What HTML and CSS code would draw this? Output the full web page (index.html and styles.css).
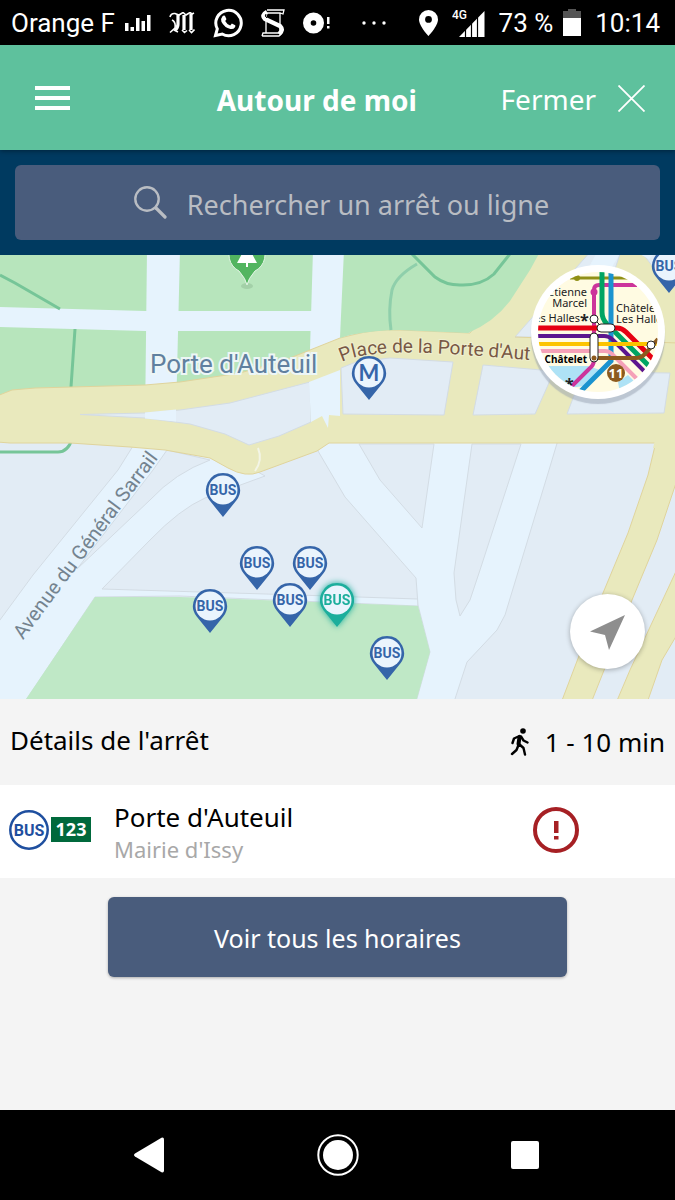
FILE: index.html
```html
<!DOCTYPE html>
<html lang="fr">
<head>
<meta charset="utf-8">
<meta name="viewport" content="width=device-width, initial-scale=1">
<title>Autour de moi</title>
<link rel="stylesheet" href="styles.css">
</head>
<body>
<svg class="defs" aria-hidden="true">
  <symbol id="pin" viewBox="0 0 36 46">
    <path fill="currentColor" d="M18 1a17 17 0 0 1 13.500 27.300L18 45 4.500 28.300A17 17 0 0 1 18 1z"/>
    <circle class="pin-face" cx="18" cy="18" r="14.500"/>
  </symbol>
</svg>

<div class="status">
  <div class="status-group">
    <span class="carrier">Orange F
      <svg width="26" height="18" viewBox="0 0 26 18" fill="#fff"><path d="M0 9h3.500v8H0zM5.500 13H9v4H5.500zM11 4h3.500v13H11zM16.500 7H20v10h-3.500zM22 1h3.500v16H22z"/></svg>
    </span>
    <svg width="26" height="22" viewBox="0 0 26 22" fill="none" stroke="#fff"><path stroke-width="1.600" d="M1 5q1-4 5-3.500L10 3l4-2.500L17 3l4-2.500L23 2l2-1M3 8q4 2 3 8l-5 4.500M5 18l4 2M13 18l2.500 2.500 2.500-2M20 18l2.500 2.500 3-3"/><path stroke-width="3.200" d="M9 3v9q0 4-3 6M15 3v15M22 2v16"/></svg>
    <svg width="30" height="30" viewBox="0 0 30 30"><path fill="none" stroke="#fff" stroke-width="3" d="M2.500 27.500l1.800-6.600A12.700 12.700 0 1 1 9.200 26z"/><path fill="#fff" d="M9.500 8.300q1-1.300 2.400-.6l1.500 3.300q.1.700-1.200 2.100 1.600 3.300 5 4.500l1.700-2 3.300 1.600q.5.500-.2 2-1.600 2.400-4.600 1.800-6-1.400-9-7.300-1-3 1.100-5.400z"/></svg>
    <svg width="24" height="28" viewBox="0 0 24 28" fill="none" stroke="#fff"><path stroke-width="1.300" d="M6 1h17l-1 4-3-1H5M5 3v21M19 4v19M1 27h17l3-3M1 27l1-3h16"/><path stroke-width="4.500" d="M6 3Q0 6 4 10l15 7q4 4-1 8"/><path stroke="#000" stroke-width="1" d="M5 5q-2 2 1 4"/></svg>
    <svg width="27" height="22" viewBox="0 0 27 22" fill="#fff"><path fill-rule="evenodd" d="M10.500.5a10.500 10.500 0 1 1 0 21 10.500 10.500 0 0 1 0-21zm0 7.700a2.800 2.800 0 1 0 0 5.600 2.800 2.800 0 0 0 0-5.600z"/><path d="M24 5h2.500v7H24zM24 14h2.500v2.500H24z"/></svg>
    <svg class="dots" width="24" height="4" viewBox="0 0 24 4" fill="#fff"><circle cx="2" cy="2" r="1.700"/><circle cx="12" cy="2" r="1.700"/><circle cx="22" cy="2" r="1.700"/></svg>
  </div>
  <div class="status-group status-right">
    <svg width="19" height="26" viewBox="0 0 19 26"><path fill="#fff" fill-rule="evenodd" d="M9.500 0A9.500 9.500 0 0 1 19 9.500C19 16 9.500 26 9.500 26S0 16 0 9.500A9.500 9.500 0 0 1 9.500 0zm0 6a3.400 3.400 0 1 0 0 6.800 3.400 3.400 0 0 0 0-6.800z"/></svg>
    <svg width="33" height="30" viewBox="0 0 33 30"><text class="network" x="0" y="11">4G</text><path fill="#fff" d="M7 29L32.500 3v26z"/><path stroke="#000" stroke-width="1.200" d="M13.500 20v9M19.500 14v15M25.500 8v21"/></svg>
    <span>73 %</span>
    <svg class="battery" width="18" height="27" viewBox="0 0 18 27"><path fill="#555" d="M5 0h8v2h5v8H0V2h5z"/><path fill="#fff" d="M0 9h18v18H0z"/></svg>
    <span>10:14</span>
  </div>
</div>

<header class="header">
  <button class="menu" type="button" aria-label="Menu">
    <svg width="35" height="24" viewBox="0 0 35 24" fill="#fff"><path d="M0 0h35v4H0zM0 10h35v4H0zM0 20h35v4H0z"/></svg>
  </button>
  <h1 class="title">Autour de moi</h1>
  <button class="close" type="button">Fermer
    <svg width="27" height="27" viewBox="0 0 27 27" stroke="#fff" stroke-width="1.800"><path d="M.5.500l26 26M26.500.500l-26 26"/></svg>
  </button>
</header>

<div class="search">
  <label class="search-box">
    <svg width="33" height="33" viewBox="0 0 33 33" fill="none" stroke="#b9bdc3"><circle cx="13" cy="13" r="11.700" stroke-width="2.400"/><path stroke-width="3.200" stroke-linecap="round" d="M22 22l9 9"/></svg>
    <input class="search-input" type="text" placeholder="Rechercher un arrêt ou ligne" aria-label="Rechercher un arrêt ou ligne">
  </label>
</div>

<main class="main">
  <section class="map" aria-label="Plan">
    <svg class="map-canvas" viewBox="0 255 675 444" preserveAspectRatio="xMidYMid slice">
      <rect class="block" x="-5" y="250" width="690" height="455"/>
      <path class="green" d="M0 250H540V330H345L340 345 180 390 0 396z"/>
      <g class="minor">
        <path d="M147 250h33l-4 165v10h-31zM313 250h32l-3 95v80h-31l-2-42z"/>
        <path d="M-3 307l148 4h200v20H145L-3 327z"/>
      </g>
      <g class="trail">
        <path d="M0 275l15 8 45 26M75 329l-4 58M0 452h58q10 0 14-13"/>
      </g>
      <path class="minor edged" d="M133 446L118 470 33 575-3 624V703H24L95 597l85-1 238 10v-7l-120-4-196-6 48-49q30-31 55-42l60-22-50-28z"/>
      <path class="block edged" d="M167 450l-14 20-76 99 73-69q25-27 60-40z"/>
      <path class="minor edged" d="M318 440v11l27 46 71 81 2 27 12 47-14 50h38l13-40 30-32 8-15 44-145 9-30z"/>
      <path class="block edged" d="M359 444l21 36 42 48 12-84zM472 444l-18 129 2 27 4 16 10-16 10-30 41-126z"/>
      <path class="park" d="M95 597l85 0 238 9 12 46-14 50H24z"/>

      <path class="major" d="M660 425l-12 50-20 58-25 60-42 110h30l41-103 25-60 20-60v-55zM678 567l-48 103-14 33h31l15-43 16-27z"/>
      <path class="major" d="M-3 396l15-6 23-2 110-3 35-3 60-9 45-13 55-22 12-3q22-6 48-5l70 3 73-88h150v197l-18 1H329l-12 8-57 21q-14 6-32-4l-18-10-45-8-35-3-60-4H10l-13-1z"/>
      <path class="major-fill" d="M656 436h20v12h-23z"/>
      <path class="block edged" d="M80 414.500l65-1.500 35-3 50-7 80-21 1 40-32 14-30 9-24-11-35-10-45-6z"/>
      <path class="minor" d="M145 412.500l31-3v12l-31-3zM309 382l31-12v46l-11-1-1 13-6-12-11 6z"/>
      <path class="green" d="M344 250H541l-11 20-20 31q-16 21-42 32l-68-3q-24 0-50 5l-10 3z"/>
      <g class="trail">
        <path d="M410 252l25 25q12 9 28 8 19 0 31-11l19-24"/>
        <path class="trail-soft" d="M417 264q-21 12-25 26-4 20-1 40"/>
      </g>
      <path class="block edged" d="M341 368l15-6 34-4 63 4-9 53-101-1zM483 365l70 6-5 14-13 29-62 1zM583 372l87 1-6 40-97 1zM515 337l76-86h30l-10 30-40 56zM640 250l20 26 18 14v-40z"/>
      <path class="minor" d="M597 252h24l-9 15h-23zM636 252l18 2-5 5z"/>
      <path class="road-line" d="M515 337l163 6"/>
      <path class="ramp" d="M258 448q5 12-3 23"/>

      <ellipse class="poi-shadow" cx="247" cy="286" rx="6" ry="3"/>
      <path class="poi" d="M247 285q-1-6-8-14a18 18 0 1 1 16 0q-7 8-8 14z"/>
      <path fill="#fff" d="M244 250h6l7 13h-9v4h-2v-4h-9z"/>

      <path id="way-place" fill="none" d="M342 362Q355 355 380 354 410 349 550 362"/>
      <path id="way-avenue" fill="none" d="M23 640Q90 550 175 436"/>
      <text class="label-area" x="150" y="373">Porte d'Auteuil</text>
      <text class="label-major"><textPath href="#way-place">Place de la Porte d'Aut</textPath></text>
      <text class="label-street"><textPath href="#way-avenue">Avenue du Général Sarrail</textPath></text>

      <g class="pin-metro">
        <use href="#pin" x="351" y="355" width="36" height="46"/><text x="369" y="381">M</text>
      </g>
      <g class="pin-bus">
        <use href="#pin" x="651" y="248" width="36" height="46"/><text x="669" y="271">BUS</text>
        <use href="#pin" x="205" y="472" width="36" height="46"/><text x="223" y="495">BUS</text>
        <use href="#pin" x="239" y="545" width="36" height="46"/><text x="257" y="568">BUS</text>
        <use href="#pin" x="292" y="545" width="36" height="46"/><text x="310" y="568">BUS</text>
        <use href="#pin" x="272" y="582" width="36" height="46"/><text x="290" y="605">BUS</text>
        <use href="#pin" x="192" y="588" width="36" height="46"/><text x="210" y="611">BUS</text>
        <use href="#pin" x="369" y="635" width="36" height="46"/><text x="387" y="658">BUS</text>
      </g>
      <g class="pin-bus pin-selected">
        <use href="#pin" x="319" y="582" width="36" height="46"/><text x="337" y="605">BUS</text>
      </g>
    </svg>

    <button class="network-map" type="button" aria-label="Plan du réseau">
      <svg viewBox="531 265 134 134">
        <clipPath id="lens"><circle cx="598" cy="332" r="60"/></clipPath>
        <g clip-path="url(#lens)" fill="none" stroke-width="5">
          <path fill="#fffbe2" d="M531 265h134v134H531z"/>
          <path fill="#aee2f6" d="M531 366h57l12 4-16 16-30 4-23-6zM618 382l10-7 10 10-18 8z"/>
          <path stroke="#909017" stroke-width="3" d="M570 278h65"/><circle cx="577" cy="278" r="3" fill="#909017"/>
          <path stroke="#cc349b" stroke-width="4" d="M637 285h-38q-5 0-5 5v70q0 5-5 9l-22 22"/>
          <path stroke="#00a563" d="M602 270v42q0 7 5 12l42 42"/>
          <path stroke="#1b93cf" d="M611 270v91l-32 32"/>
          <path stroke="#e60012" d="M538 328h79q5 0 9 4l32 32"/>
          <path stroke="#5c158f" stroke-width="4" d="M538 336h66q5 0 9 4l32 32"/>
          <path stroke="#fcc400" stroke-width="4" d="M538 344h121"/>
          <path stroke="#f5a1b8" stroke-width="4" d="M538 351h67q4 0 7 3l27 27"/>
          <path stroke="#8c5a1e" stroke-width="4" d="M594 358h42q5 0 9-4l13-15"/>
          <circle cx="594" cy="292" r="3.500" fill="#cc349b"/>
          <g fill="#fff" stroke="#222" stroke-width="1">
            <path d="M594 319l9 9"/><circle cx="594" cy="319" r="4"/><rect x="597" y="324" width="18" height="8" rx="4"/><rect x="590" y="333" width="8" height="29" rx="4"/><circle cx="651" cy="345" r="4"/>
          </g>
          <circle cx="594" cy="358" r="2.500" fill="#8c5a1e"/>
          <circle cx="616" cy="373" r="9" fill="#8c5a1e"/>
        </g>
        <g class="lens-text" clip-path="url(#lens)">
          <text x="587" y="296" text-anchor="end">Étienne</text>
          <text x="587" y="307" text-anchor="end">Marcel</text>
          <text x="580" y="322" text-anchor="end">es Halles</text>
          <text class="lens-star" x="580" y="326">*</text>
          <text x="616" y="312">Châtelet</text>
          <text x="616" y="323">Les Halle</text>
          <text class="lens-strong" x="587" y="363" text-anchor="end">Châtelet</text>
          <text class="lens-star" x="565" y="390">*</text>
          <text class="lens-line" x="616" y="378" text-anchor="middle">11</text>
        </g>
      </svg>
    </button>
    <button class="locate" type="button" aria-label="Ma position">
      <svg width="36" height="36" viewBox="0 0 36 36"><path fill="#8e8e8e" d="M0 17.500L35 1 19 36l-4-15z"/></svg>
    </button>
  </section>

  <section class="details">
    <div class="details-head">
      <h2 class="details-title">Détails de l'arrêt</h2>
      <span class="walk">
        <svg width="19" height="28" viewBox="0 0 19 28" fill="none" stroke="#000" stroke-linecap="round" stroke-linejoin="round"><circle cx="13" cy="3" r="2.800" fill="#000" stroke="none"/><path stroke-width="4" d="M9.500 9l-1 7"/><path stroke-width="2.400" d="M9.500 8L4 10.500 2.500 15M11 8.500l2.500 4 4 2M8.500 17l-2 5L2 26M9 16l4.500 4 1.500 6.500"/></svg>
        1 - 10 min
      </span>
    </div>
    <div class="stop">
      <span class="line">
        <svg width="40" height="40" viewBox="0 0 40 40"><circle cx="20" cy="20" r="18.700" fill="#fff" stroke="#1f4f9f" stroke-width="2.500"/><text class="line-bus" x="20" y="26">BUS</text></svg>
        <span class="line-number">123</span>
      </span>
      <span class="stop-names">
        <span class="stop-name">Porte d'Auteuil</span>
        <span class="stop-direction">Mairie d'Issy</span>
      </span>
      <svg class="alert" width="46" height="46" viewBox="0 0 46 46" role="img" aria-label="Perturbation"><circle cx="23" cy="23" r="21" fill="none" stroke="#a62024" stroke-width="4"/><path fill="#a62024" d="M21 14h4.500v12H21zM21 29h4.500v3.500H21z"/></svg>
    </div>
    <button class="schedules" type="button">Voir tous les horaires</button>
  </section>
</main>

<nav class="system-nav">
  <button type="button" aria-label="Retour"><svg width="30" height="36" viewBox="0 0 30 36"><path fill="#fff" d="M1 16.500L27.500.7Q30 0 30 2.500v31q0 2.500-2.500 1.800L1 19.500q-2-1.500 0-3z"/></svg></button>
  <button type="button" aria-label="Accueil"><svg width="42" height="42" viewBox="0 0 42 42"><circle cx="21" cy="21" r="19.700" fill="none" stroke="#fff" stroke-width="2"/><circle cx="21" cy="21" r="15" fill="#fff"/></svg></button>
  <button type="button" aria-label="Applications récentes"><svg width="28" height="28" viewBox="0 0 28 28"><rect width="28" height="28" rx="2" fill="#fff"/></svg></button>
</nav>
</body>
</html>
```
FILE: styles.css
```css
* { box-sizing: border-box; }

body {
  margin: 0;
  min-height: 100vh;
  display: flex;
  flex-direction: column;
  background: #f4f4f4;
  color: #000;
  font-family: "Noto Sans", "Open Sans", sans-serif;
  font-size: 26px;
}

button {
  border: 0;
  padding: 0;
  background: none;
  color: inherit;
  font: inherit;
  cursor: pointer;
}

svg { display: block; flex: none; }

.defs { position: absolute; width: 0; height: 0; }

.status {
  height: 45px;
  padding: 0 15px 0 11px;
  display: flex;
  align-items: center;
  justify-content: space-between;
  background: #000;
  color: #fff;
  font: 26px/44px Roboto, sans-serif;
  white-space: nowrap;
}
.status-group { display: flex; align-items: center; gap: 18px; }
.status-right { gap: 14px; }
.carrier { display: flex; align-items: center; gap: 10px; }
.dots { margin-left: 14px; }
.battery { margin-left: -4px; }
.network { fill: #fff; font: 500 12px Roboto, sans-serif; }

.header {
  position: relative;
  z-index: 1;
  height: 105px;
  padding-right: 30px;
  display: flex;
  align-items: center;
  background: #5ec19d;
  color: #fff;
  font-size: 28px;
  box-shadow: 0 1px 5px rgba(0, 0, 0, .4);
}
.menu { padding: 0 63px 0 35px; }
.title {
  flex: 1;
  margin: 0;
  padding-top: 4px;
  text-align: center;
  font-size: 28px;
  font-weight: 700;
}
.close { padding-top: 2px; display: flex; align-items: center; gap: 22px; }

.search { padding: 15px; background: #003a60; }
.search-box {
  height: 75px;
  padding-left: 8px;
  display: flex;
  align-items: center;
  justify-content: center;
  gap: 20px;
  border-radius: 6px;
  background: #495c7c;
}
.search-input {
  field-sizing: content;
  padding: 4px 0 0;
  border: 0;
  outline: 0;
  background: none;
  color: #fff;
  font: inherit;
  font-size: 27px;
}
.search-input::placeholder { color: #b9bdc3; opacity: 1; }

.main { flex: 1; }

.map {
  position: relative;
  aspect-ratio: 675 / 444;
  overflow: hidden;
}
.map-canvas { width: 100%; height: 100%; }
.block { fill: #e2ecf5; }
.green { fill: #b7e5bc; }
.park { fill: #bfe8c6; }
.minor { fill: #e6f3fd; }
.edged { stroke: #d3dce4; stroke-width: 1; }
.major { fill: #e9e9bd; stroke: #e0d49c; stroke-width: 1; }
.major-fill { fill: #e9e9bd; }
.trail { fill: none; stroke: #76c598; stroke-width: 3; }
.trail-soft { stroke: #8fcfab; }
.road-line { fill: none; stroke: #e0d49c; }
.ramp { fill: none; stroke: #f3f5e6; stroke-width: 2; }
.poi { fill: #52b560; stroke: #e3f5e5; stroke-width: 1; }
.poi-shadow { fill: #a3d0a8; }

.label-area {
  fill: #60809f;
  stroke: #edf6f6;
  stroke-width: 4;
  paint-order: stroke;
  font: 26px Roboto, sans-serif;
}
.label-major {
  fill: #785844;
  stroke: #efefcf;
  stroke-width: 2;
  paint-order: stroke;
  font: 19px Roboto, sans-serif;
}
.label-street { fill: #74838f; font: 20px Roboto, sans-serif; }

.pin-face { fill: #eaf4fd; }
.pin-bus,
.pin-metro {
  color: #3565a9;
  fill: currentColor;
  text-anchor: middle;
  font: 700 14px Roboto, sans-serif;
}
.pin-metro { font: 700 22px Lato, sans-serif; }
.pin-selected { color: #1cae9c; filter: drop-shadow(0 0 3px #1cae9c); }

.network-map {
  position: absolute;
  top: 10px;
  right: 10px;
  width: 134px;
  height: 134px;
  border-radius: 50%;
  background: #fff;
  box-shadow: 0 5px 1px rgba(150, 160, 175, .5);
}
.lens-text { fill: #222; font: 11px "Noto Sans", sans-serif; }
.lens-strong { fill: #000; font-size: 10px; font-weight: 700; }
.lens-star { font-size: 16px; font-weight: 700; }
.lens-line { fill: #fff; font-size: 13px; font-weight: 700; }

.locate {
  position: absolute;
  right: 30px;
  bottom: 30px;
  width: 75px;
  height: 75px;
  display: grid;
  place-items: center;
  border-radius: 50%;
  background: #fff;
  box-shadow: 0 1px 5px rgba(0, 0, 0, .3);
}

.details { display: flex; flex-direction: column; }
.details-head {
  min-height: 86px;
  padding: 0 10px;
  display: flex;
  align-items: center;
  justify-content: space-between;
}
.details-title { margin: 0; padding-bottom: 4px; font-size: 26px; font-weight: 400; }
.walk { display: flex; align-items: center; gap: 16px; }

.stop {
  min-height: 93px;
  padding: 0 96px 4px 9px;
  display: flex;
  align-items: center;
  background: #fff;
}
.line { display: flex; align-items: center; gap: 2px; }
.line-bus {
  fill: #1f4f9f;
  text-anchor: middle;
  font: 700 16px Roboto, sans-serif;
}
.line-number {
  width: 40px;
  background: #00693c;
  color: #fff;
  font-size: 18px;
  font-weight: 700;
  line-height: 25px;
  text-align: center;
}
.stop-names { flex: 1; margin-left: 23px; padding-top: 6px; display: flex; flex-direction: column; line-height: 32px; }
.stop-name { font-size: 26px; }
.stop-direction { color: #a8a8a8; font-size: 22px; }

.schedules {
  width: 68%;
  max-width: 460px;
  min-height: 80px;
  margin: 19px auto;
  padding-top: 2px;
  border-radius: 6px;
  background: #495c7c;
  color: #fff;
  font-size: 25px;
  box-shadow: 0 1px 3px rgba(0, 0, 0, .3);
}

.system-nav {
  height: 90px;
  padding: 0 136px 0 134px;
  display: flex;
  align-items: center;
  justify-content: space-between;
  background: #000;
}
```
